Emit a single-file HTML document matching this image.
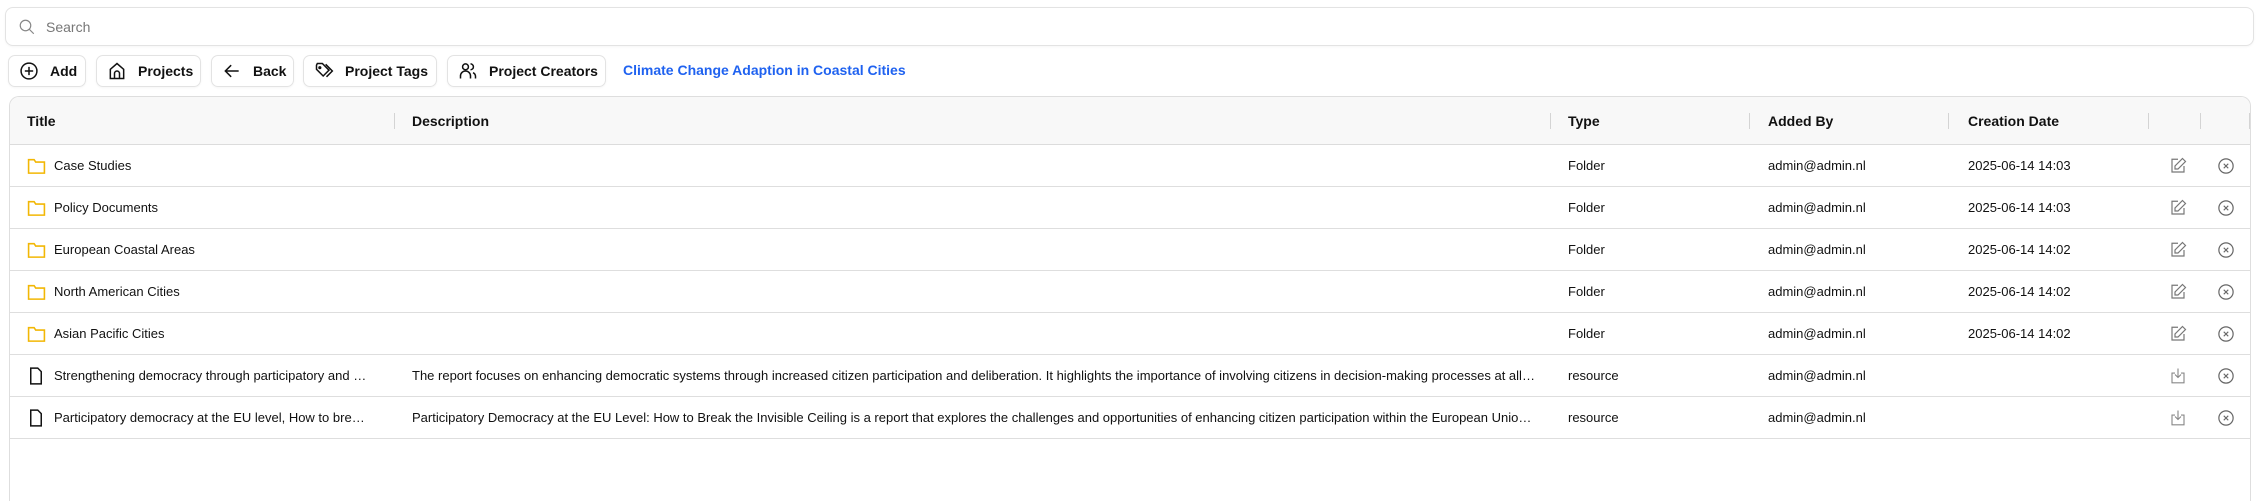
<!DOCTYPE html>
<html style="height:501px;overflow:hidden"><head><meta charset="utf-8"><style>
*{box-sizing:border-box;margin:0;padding:0}
body{width:2260px;height:501px;overflow:hidden;background:#fff;font-family:"Liberation Sans",sans-serif;color:#111;position:relative}
.search{position:absolute;left:5px;top:7px;width:2249px;height:39px;border:1px solid #e3e3e3;border-radius:8px;box-shadow:0 1px 2px rgba(0,0,0,.04)}
.search span{position:absolute;left:40px;top:11px;font-size:14px;color:#777}
.search svg{position:absolute;left:12px;top:10px}
.btn{position:absolute;top:55px;height:32px;border:1px solid #e3e3e3;border-radius:7px;font-size:14px;font-weight:600;color:#111;display:flex;align-items:center;padding-left:10px;gap:11px;box-shadow:0 1px 2px rgba(0,0,0,.04)}
.link{position:absolute;left:623px;top:62px;font-size:14px;font-weight:600;color:#1f62f0}
.table{position:absolute;left:9px;top:96px;width:2242px;height:405px;border:1px solid #dedede;border-bottom:none;border-radius:10px 10px 0 0;overflow:hidden}
.head{position:absolute;left:0;top:0;width:100%;height:48px;background:#f8f8f8;border-bottom:1px solid #dcdcdc}
.h{position:absolute;top:16px;font-size:14px;font-weight:600}
.sep{position:absolute;top:16px;width:1px;height:16px;background:#d4d4d4}
.row{position:absolute;left:0;width:100%;height:42px;border-bottom:1px solid #dedede}
.c{position:absolute;top:13px;font-size:13px;white-space:nowrap;overflow:hidden;text-overflow:ellipsis}
.ic{position:absolute;top:12px}
</style></head><body>
<div class="search"><svg width="18" height="18" viewBox="0 0 24 24" fill="none" stroke="#888" stroke-width="1.6"><circle cx="10" cy="10" r="7"/><path d="M15 15l6 6"/></svg><span>Search</span></div>

<div class="btn" style="left:8px;width:78px"><svg width="20" height="20" viewBox="0 0 24 24" fill="none" stroke="#111" stroke-width="1.8"><circle cx="12" cy="12" r="9.5"/><path d="M12 7v10M7 12h10"/></svg>Add</div>
<div class="btn" style="left:96px;width:105px"><svg width="20" height="20" viewBox="0 0 24 24" fill="none" stroke="#111" stroke-width="1.8"><path d="M4 21V10l8-7 8 7v11z"/><path d="M9 21v-6a3 3 0 0 1 6 0v6"/></svg>Projects</div>
<div class="btn" style="left:211px;width:83px"><svg width="20" height="20" viewBox="0 0 24 24" fill="none" stroke="#111" stroke-width="1.8"><path d="M20 12H5M11 5l-7 7 7 7"/></svg>Back</div>
<div class="btn" style="left:303px;width:134px"><svg width="20" height="20" viewBox="0 0 24 24" fill="none" stroke="#111" stroke-width="1.8"><path d="M3 5v5l8 8 7-7-8-8H4z"/><path d="M14 4l8 8-7 7"/><circle cx="7" cy="8" r="1"/></svg>Project Tags</div>
<div class="btn" style="left:447px;width:159px"><svg width="20" height="20" viewBox="0 0 24 24" fill="none" stroke="#111" stroke-width="1.8"><circle cx="9" cy="7" r="3.5"/><path d="M3 21v-3a5 5 0 0 1 12 0v3"/><path d="M15 3.5a3.5 3.5 0 0 1 0 7M18 14a5 5 0 0 1 3 4v3"/></svg>Project Creators</div>
<div class="link">Climate Change Adaption in Coastal Cities</div>

<div class="table">
<div class="head">
<div class="h" style="left:17px">Title</div><div class="sep" style="left:384px"></div>
<div class="h" style="left:402px">Description</div><div class="sep" style="left:1540px"></div>
<div class="h" style="left:1558px">Type</div><div class="sep" style="left:1739px"></div>
<div class="h" style="left:1758px">Added By</div><div class="sep" style="left:1938px"></div>
<div class="h" style="left:1958px">Creation Date</div><div class="sep" style="left:2138px"></div>
<div class="sep" style="left:2190px"></div><div class="sep" style="left:2239px"></div>
</div>
<div id="rows"></div>
</div>
<script>
var F='<svg class="ic" style="left:17px" width="19" height="18" viewBox="0 0 24 22" fill="none" stroke="#f2b705" stroke-width="2"><path d="M2 3h7l2 3h11v14H2z"/></svg>';
var D='<svg class="ic" style="left:19px" width="14" height="18" viewBox="0 0 16 20" fill="none" stroke="#111" stroke-width="1.7"><path d="M2 1h8l4 4v14H2z"/></svg>';
var E='<svg class="ic" style="left:2159px" width="18" height="18" viewBox="0 0 24 24" fill="none" stroke="#777" stroke-width="1.6"><path d="M12 3H4v17h16v-8"/><path d="M18 2l4 4-10 10H8v-4z"/></svg>';
var L='<svg class="ic" style="left:2159px" width="18" height="18" viewBox="0 0 24 24" fill="none" stroke="#888" stroke-width="1.5"><path d="M8 8H4v13h16V8h-4"/><path d="M12 2v12M8 10l4 4 4-4"/></svg>';
var X='<svg class="ic" style="left:2207px" width="18" height="18" viewBox="0 0 24 24" fill="none" stroke="#666" stroke-width="1.6"><circle cx="12" cy="12" r="9.5"/><path d="M9 9l6 6M15 9l-6 6"/></svg>';
var r=[
[1,'Case Studies','','Folder','2025-06-14 14:03'],
[1,'Policy Documents','','Folder','2025-06-14 14:03'],
[1,'European Coastal Areas','','Folder','2025-06-14 14:02'],
[1,'North American Cities','','Folder','2025-06-14 14:02'],
[1,'Asian Pacific Cities','','Folder','2025-06-14 14:02'],
[0,'Strengthening democracy through participatory and deliberative mechanisms','The report focuses on enhancing democratic systems through increased citizen participation and deliberation. It highlights the importance of involving citizens in decision-making processes at all levels of government and society','resource',''],
[0,'Participatory democracy at the EU level, How to break the invisible ceiling','Participatory Democracy at the EU Level: How to Break the Invisible Ceiling is a report that explores the challenges and opportunities of enhancing citizen participation within the European Union institutions and policies','resource','']];
var h='';
r.forEach(function(a,i){h+='<div class="row" style="top:'+(48+i*42)+'px">'+(a[0]?F:D)+
'<div class="c" style="left:44px;width:315px">'+a[1]+'</div>'+
'<div class="c" style="left:402px;width:1125px">'+a[2]+'</div>'+
'<div class="c" style="left:1558px">'+a[3]+'</div>'+
'<div class="c" style="left:1758px">admin@admin.nl</div>'+
'<div class="c" style="left:1958px">'+a[4]+'</div>'+(a[0]?E:L)+X+'</div>';});
document.getElementById('rows').innerHTML=h;
</script>
</body></html>
